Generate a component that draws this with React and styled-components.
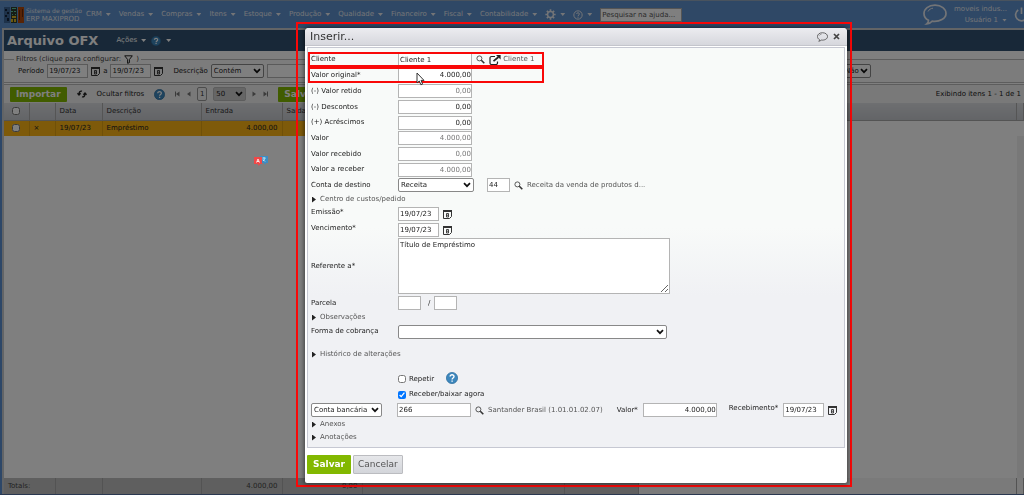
import React, { useState } from 'react';
import styled, { createGlobalStyle, css } from 'styled-components';

const GlobalStyle = createGlobalStyle`
  *, *::before, *::after {
    box-sizing: border-box;
  }

  body {
    margin: 0;
    background: #5b8fd0;
    font-family: 'DejaVu Sans', Verdana, sans-serif;
    font-size: 7px;
    line-height: 9px;
    color: #222;
    overflow: hidden;
  }

  input, select, textarea, button {
    font: inherit;
    color: inherit;
    margin: 0;
  }

  svg {
    display: block;
    flex: none;
  }
`;

const chevron =
  "url(\"data:image/svg+xml,%3Csvg xmlns='http://www.w3.org/2000/svg' viewBox='0 0 8 8'%3E%3Cpath d='M1 2.2l3 3 3-3' fill='none' stroke='%23111' stroke-width='1.7'/%3E%3C/svg%3E\")";

const Screen = styled.div`
  min-height: 100vh;
  display: flex;
  flex-direction: column;
  border-bottom: 1px solid #5570a0;
`;

/* ---------- top menu ---------- */

const TopBar = styled.header`
  display: flex;
  align-items: center;
  height: 28px;
  padding-left: 4px;
  background: #5e90cc;
  border-top: 1px solid #93a7bd;
  color: #e6e9ee;
  overflow: hidden;
`;

const Brand = styled.a`
  display: flex;
  align-items: center;
  gap: 2px;
  width: 82px;
  color: inherit;
  text-decoration: none;
`;

const BrandText = styled.span`
  font-size: 7px;
  line-height: 8px;
  white-space: nowrap;

  small {
    display: block;
    font-size: 6px;
  }
`;

const Menu = styled.nav`
  display: flex;
  align-items: center;
  gap: 8px;
`;

const MenuButton = styled.button`
  display: flex;
  align-items: center;
  gap: 4px;
  padding: 0;
  border: 0;
  background: none;
  white-space: nowrap;
`;

const Caret = styled.span`
  width: 5px;
  height: 3px;
  background: currentColor;
  clip-path: polygon(0 0, 100% 0, 50% 100%);
`;

const HelpSearch = styled.input`
  width: 82px;
  height: 14px;
  padding: 0 1px;
  border: 1px solid #aaa;
  background: #fff;

  &::placeholder {
    color: #555;
    opacity: 1;
  }
`;

const UserArea = styled.div`
  display: flex;
  align-items: center;
  gap: 7px;
  margin-left: auto;
`;

const UserName = styled.div`
  display: flex;
  flex-direction: column;
  align-items: flex-end;
  gap: 2px;
  white-space: nowrap;
`;

const PowerButton = styled.button`
  width: 10px;
  padding: 0;
  border: 0;
  background: none;
  overflow: hidden;
`;

/* ---------- page behind the dialog ---------- */

const Page = styled.main`
  flex: 1;
  display: flex;
  flex-direction: column;
  margin-left: 2px;
  border: solid #c4c8cc;
  border-width: 2px 0 0 2px;
  background: #fff;
`;

const TitleBar = styled.div`
  display: flex;
  align-items: center;
  height: 21px;
  padding-left: 3px;
  background: #315170;
  color: #fff;
`;

const PageTitle = styled.h1`
  margin: 0 18px 0 0;
  font-size: 13px;
  line-height: 16px;
`;

const TitleActions = styled.div`
  display: flex;
  align-items: center;
  gap: 5px;
`;

const Filters = styled.fieldset`
  margin: 3px 0 0;
  padding: 0 0 4px 14px;
  border: 1px solid #bbb;
  border-width: 1px 0;
  background: #f8f8f8;
  min-width: 0;
`;

const FilterLegend = styled.legend`
  display: flex;
  align-items: center;
  gap: 3px;
  margin-left: -4px;
  padding: 0 2px;
  height: 10px;
  color: #444;
`;

const FilterRow = styled.div`
  display: flex;
  align-items: center;
  gap: 3px;
  height: 14px;
`;

const FilterLabel = styled.label`
  margin-left: 7px;
`;

const FilterEnd = styled.div`
  margin: 0 153px 0 auto;
`;

const Toolbar = styled.div`
  display: flex;
  align-items: center;
  gap: 10px;
  height: 19px;
  margin-top: 1px;
  padding: 0 3px 0 6px;
  border-top: 1px solid #bbb;
  background: #f2f2f2;
  white-space: nowrap;
`;

const ToolButton = styled.button`
  display: flex;
  padding: 0;
  border: 0;
  background: none;
`;

const Pager = styled.div`
  display: flex;
  align-items: center;
  gap: 6px;
  color: #777;
`;

const CurrentPage = styled.span`
  width: 10px;
  border: 1px solid #999;
  border-radius: 2px;
  line-height: 12px;
  text-align: center;
  color: #333;
`;

const Counter = styled.span`
  margin-left: auto;
`;

const Grid = styled.table`
  width: 100%;
  table-layout: fixed;
  border-collapse: collapse;
  white-space: nowrap;

  th, td {
    height: 16px;
    padding: 0 4px;
    border-right: 1px solid #aaa;
    font-weight: normal;
    text-align: left;
  }

  thead th {
    height: 17px;
    background: linear-gradient(#dcdee2, #c6c9ce);
    border-bottom: 1px solid #a8a8a8;
    color: #333;
  }

  tbody td {
    background: #fcb414;
    border-color: #e0a010;
  }

  tfoot td {
    background: #bfbfbf;
    border-color: #a6a6a6;
    color: #444;
  }
`;

const NumberCell = styled.td`
  && {
    text-align: right;
  }
`;

const RestCell = styled.td`
  && {
    background: #f4f4f4;
  }
`;

const GridTick = styled.input`
  display: block;
  width: 8px;
  height: 8px;
  margin: 0 auto;
`;

const GridSpace = styled.div`
  flex: 1;
  border-right: 7px solid #f1f1f1;
`;

/* ---------- shared form parts ---------- */

const field = css`
  height: ${props => (props.$short ? 13 : 14)}px;
  width: ${props => props.$width}px;
  border: 1px solid #b4b4b4;
  background-color: #fff;
  color: #222;
`;

const TextField = styled.input`
  ${field}
  padding: 0 1px;
  text-align: ${props => (props.$number ? 'right' : 'left')};
  ${props => props.$number && 'padding-right: 0;'}

  &:disabled {
    color: #777;
  }
`;

const SelectField = styled.select`
  ${field}
  appearance: none;
  padding: 0 10px 0 2px;
  border-color: #888;
  border-radius: 2px;
  background-image: ${chevron};
  background-repeat: no-repeat;
  background-position: right 2px center;
  background-size: 8px 8px;
`;

const PageSize = styled(SelectField)`
  background-color: #ccc;
  border-color: #bbb;
`;

const GreenButton = styled.button`
  height: ${props => (props.$small ? 15 : 19)}px;
  padding: 0 6px;
  border: 0;
  border-radius: 1px;
  background: #82b800;
  color: #fff;
  font-size: 9px;
  font-weight: bold;
`;

const CancelButton = styled.button`
  height: 19px;
  padding: 0 4px;
  border: 1px solid #bbbcc0;
  border-radius: 1px;
  background: linear-gradient(#e6e7ea, #d3d5da);
  color: #555;
  font-size: 9px;
`;

/* ---------- dialog ---------- */

const Backdrop = styled.div`
  position: fixed;
  inset: 0;
  display: flex;
  align-items: flex-start;
  padding: 22px 172px 0 296px;
  background: rgba(0, 0, 0, 0.5);
`;

const Frame = styled.div`
  flex: 1;
  min-width: 0;
  padding: 4px 3px 2px 7px;
  border: 2px solid #f90808;
`;

const Dialog = styled.section`
  background: #fff;
  border-radius: 4px 4px 2px 2px;
  box-shadow: 0 0 4px 1px rgba(0, 0, 0, 0.5);
`;

const DialogHeader = styled.header`
  display: flex;
  align-items: center;
  height: 18px;
  padding: 0 7px 0 5px;
  border-radius: 4px 4px 0 0;
  border-bottom: 1px solid #c4c5cc;
  background: linear-gradient(#ececf0, #d6d7dd);
`;

const DialogTitle = styled.h2`
  flex: 1;
  margin: 0;
  font-size: 11px;
  font-weight: normal;
  line-height: 14px;
  color: #333;
`;

const HeaderButton = styled.button`
  display: flex;
  padding: 0;
  margin-left: 5px;
  border: 0;
  background: none;
  color: #444;
`;

const Panel = styled.form`
  margin: 1px 2px 0;
  padding: 4px 0 3px;
  border: 1px solid #c6c8d2;
  background: linear-gradient(#f8faf9 45%, #f0f1f4 62%);
`;

const Row = styled.div`
  position: relative;
  display: flex;
  align-items: center;
  min-height: ${props => (props.$tight ? 15 : 16)}px;
  padding-left: 3px;
  white-space: nowrap;

  ${props => props.$marked && css`
    &::after {
      content: '';
      position: absolute;
      inset: 0 auto 0 0;
      width: 236px;
      border: 2px solid #f90808;
      pointer-events: none;
    }
  `}
`;

const NoteRow = styled(Row)`
  padding-bottom: 1px;
`;

const Label = styled.label`
  width: 87px;
  color: #222;
  ${props => props.$raised && 'padding-bottom: 3px;'}
`;

const InlineLabel = styled.label`
  margin: 0 5px 0 ${props => (props.$far ? 12 : 14)}px;
  ${props => props.$raised && 'padding-bottom: 3px;'}
`;

const Hint = styled.span`
  color: #555;
`;

const IconButton = styled.button`
  display: flex;
  margin: 0 4px;
  padding: 0;
  border: 0;
  background: none;
  color: #333;
`;

const Slash = styled.span`
  width: 13px;
  padding-left: 7px;
`;

const Note = styled.textarea`
  width: 272px;
  height: 56px;
  padding: 2px 1px;
  border: 1px solid #b4b4b4;
  background: #fff;
  resize: both;
`;

const Toggle = styled.button`
  display: flex;
  align-items: center;
  gap: 4px;
  height: 13px;
  margin-top: ${props => (props.$spaced ? 9 : 0)}px;
  padding: 0 0 0 4px;
  border: 0;
  background: none;
  color: #555;

  &::before {
    content: '';
    width: 4px;
    height: 6px;
    background: #222;
    clip-path: polygon(0 0, 100% 50%, 0 100%);
  }
`;

const Checks = styled.div`
  margin-top: 10px;
  padding-left: 87px;
`;

const TickLabel = styled.label`
  display: flex;
  align-items: center;
  gap: 3px;

  input {
    width: 8px;
    height: 8px;
  }
`;

const AccountSelect = styled.div`
  width: 86px;
`;

const DialogFooter = styled.footer`
  display: flex;
  gap: 2px;
  padding: 7px 2px 9px;
`;

/* ---------- things floating over the page ---------- */

const Pointer = styled.svg`
  position: absolute;
  left: 108px;
  top: 5px;
  z-index: 1;
`;

const TranslateBadge = styled.svg`
  position: absolute;
  left: 254px;
  top: 156px;
`;

/* ---------- icons ---------- */

const Logo = () => (
  <svg width="20" height="16" viewBox="0 0 20 16" aria-hidden="true">
    <rect width="6" height="16" fill="#3c6494" />
    <path d="M1 2h2v2H1zM3 5h2v2H3zM1 8h2v2H1zM3 11h2v3H3z" fill="#14243c" />
    <rect x="7" width="6" height="16" fill="#2c3a2c" />
    <path d="M8 1h4v1H8zM7 4h2v1H7zM10 4h2v1h-2zM8 7h1v1H8zM11 7h1v1h-1z" fill="#5cc49c" />
    <path d="M8 9h4v2H8zM7 12h2v3H7zM10 12h2v3h-2z" fill="#d8b020" />
    <rect x="14" width="6" height="16" fill="#b0480c" />
    <path d="M15 3h1v10h-1zM18 2h1v8h-1z" fill="#6c2604" />
  </svg>
);

const HelpIcon = ({ size = 10 }) => (
  <svg width={size} height={size} viewBox="0 0 12 12" aria-hidden="true">
    <circle cx="6" cy="6" r="5.6" fill="#3d87bd" stroke="#2b6c9c" strokeWidth=".7" />
    <path d="M4.1 4.6c0-2.5 3.9-2.4 3.9-.1C8 6 6.1 5.9 6.1 7.4M6.1 8.4v1.3" fill="none" stroke="#fff" strokeWidth="1.4" />
  </svg>
);

const OutlineHelpIcon = () => (
  <svg width="10" height="10" viewBox="0 0 12 12" fill="none" stroke="currentColor" strokeWidth="1.2" aria-hidden="true">
    <circle cx="6" cy="6" r="5" />
    <path d="M4.3 4.8c0-2 3.4-2 3.4 0C7.7 6 6 6 6 7.2M6 8v1.3" />
  </svg>
);

const GearIcon = () => (
  <svg width="11" height="11" viewBox="0 0 12 12" fill="none" stroke="currentColor" aria-hidden="true">
    <circle cx="6" cy="6" r="3.2" strokeWidth="1.6" />
    <path d="M6 .4v2M6 9.600v2M.4 6h2M9.600 6h2M2 2l1.500 1.500M8.500 8.500L10 10M10 2L8.500 3.500M3.500 8.500L2 10" strokeWidth="1.8" />
  </svg>
);

const BubbleIcon = ({ width, height }) => (
  <svg width={width} height={height} viewBox="0 0 24 21" fill="none" stroke="currentColor" strokeWidth="1.7" aria-hidden="true">
    <path d="M12 1.200C5.500 1.200 1 4.800 1 9.400c0 3 1.700 5.400 4.500 6.800.1 1.500-.6 2.700-1.700 3.600 2.400-.2 4.200-1.200 5.300-2.600 7.700 1 13.900-2.800 13.900-7.800 0-4.600-4.500-8.200-11-8.200z" />
    <path d="M5 7.500C6 5.500 7.800 4.500 10 4.200" strokeWidth="1" />
  </svg>
);

const PowerIcon = () => (
  <svg width="15" height="15" viewBox="0 0 16 16" fill="none" stroke="currentColor" strokeWidth="1.8" aria-hidden="true">
    <path d="M4.500 3.200a6.300 6.300 0 1 0 7 0M8 .5v7" />
  </svg>
);

const FunnelIcon = () => (
  <svg width="9" height="9" viewBox="0 0 9 9" fill="none" stroke="#222" aria-hidden="true">
    <path d="M.7.8h7.600L5.400 4.500v3.200l-1.800.6V4.500z" />
  </svg>
);

const CalendarIcon = () => (
  <svg width="9" height="9" viewBox="0 0 9 9" fill="none" stroke="#333" aria-hidden="true">
    <path d="M0 1h9" strokeWidth="2" />
    <path d="M.5 1v7.500h6l2-2V1" />
    <path d="M3.500 3.500h2v3.500h-2zM3.500 5.200h2" strokeWidth=".9" />
  </svg>
);

const SearchIcon = () => (
  <svg width="9" height="9" viewBox="0 0 9 9" fill="none" stroke="currentColor" aria-hidden="true">
    <circle cx="3.400" cy="3.400" r="2.500" strokeWidth=".8" />
    <path d="M5.300 5.200l3 3" strokeWidth="1.6" />
  </svg>
);

const ExternalIcon = () => (
  <svg width="12" height="10" viewBox="0 0 12 10" fill="none" stroke="#222" aria-hidden="true">
    <path d="M6 1.500H2.500a1.500 1.500 0 0 0-1.500 1.500v5a1.500 1.500 0 0 0 1.500 1.500H7A1.500 1.500 0 0 0 8.500 8V6.500" strokeWidth="1.2" />
    <path d="M4.500 6.200l5-4.200" strokeWidth="1.7" />
    <path d="M7 0h4.600v4.600z" fill="#222" stroke="none" />
  </svg>
);

const CloseIcon = () => (
  <svg width="7" height="7" viewBox="0 0 7 7" stroke="currentColor" strokeWidth="1.7" aria-hidden="true">
    <path d="M1 1l5 5M6 1L1 6" />
  </svg>
);

const RefreshIcon = () => (
  <svg width="10" height="8" viewBox="0 0 10 8" fill="none" stroke="#222" strokeWidth="1.3" aria-hidden="true">
    <path d="M5 1.200C3 .7 2 2 2 4.500M.4 3.300L2 5l1.600-1.700M5 6.800c2 .5 3-.8 3-3.300M6.400 4.700L8 3l1.600 1.700" />
  </svg>
);

const PagerIcon = ({ flip, bar }) => (
  <svg width="5" height="6" viewBox="0 0 5 6" fill="currentColor" transform={flip ? 'scale(-1 1)' : undefined} aria-hidden="true">
    <path d="M4.500.5v5L1 3z" />
    {bar && <path d="M0 .5h1v5H0z" />}
  </svg>
);

const menus = [
  'CRM', 'Vendas', 'Compras', 'Itens', 'Estoque',
  'Produção', 'Qualidade', 'Financeiro', 'Fiscal', 'Contabilidade'
];

const amounts = [
  { id: 'retido', label: '(-) Valor retido', value: '0,00', disabled: true },
  { id: 'descontos', label: '(-) Descontos', value: '0,00' },
  { id: 'acrescimos', label: '(+) Acréscimos', value: '0,00', tight: true },
  { id: 'valor', label: 'Valor', value: '4.000,00', disabled: true },
  { id: 'recebido', label: 'Valor recebido', value: '0,00', disabled: true },
  { id: 'receber', label: 'Valor a receber', value: '4.000,00', disabled: true, tight: true }
];

const Columns = () => (
  <colgroup>
    {[25, 26, 47, 99, 81, 80, 202, 74].map((width, index) => (
      <col key={index} width={width} />
    ))}
    <col />
    <col width="7" />
  </colgroup>
);

const DateField = ({ id, label }) => (
  <>
    <TextField id={id} aria-label={label} $width={41} defaultValue="19/07/23" />
    <IconButton type="button" aria-label="Abrir calendário"><CalendarIcon /></IconButton>
  </>
);

const Header = () => (
  <TopBar>
    <Brand href="#">
      <Logo />
      <BrandText><small>Sistema de gestão</small>ERP MAXIPROD</BrandText>
    </Brand>
    <Menu>
      {menus.map(name => (
        <MenuButton key={name}>{name}<Caret /></MenuButton>
      ))}
      <MenuButton aria-label="Configurações"><GearIcon /><Caret /></MenuButton>
      <MenuButton aria-label="Ajuda"><OutlineHelpIcon /><Caret /></MenuButton>
      <HelpSearch aria-label="Pesquisar na ajuda" placeholder="Pesquisar na ajuda..." />
    </Menu>
    <UserArea>
      <BubbleIcon width={24} height={21} />
      <UserName>
        <span>moveis indus...</span>
        <MenuButton>Usuário 1<Caret /></MenuButton>
      </UserName>
      <PowerButton aria-label="Sair"><PowerIcon /></PowerButton>
    </UserArea>
  </TopBar>
);

const OfxPage = () => (
  <Page>
    <TitleBar>
      <PageTitle>Arquivo OFX</PageTitle>
      <TitleActions>
        <MenuButton>Ações<Caret /></MenuButton>
        <MenuButton aria-label="Ajuda"><HelpIcon /></MenuButton>
        <MenuButton aria-label="Mais"><Caret /></MenuButton>
      </TitleActions>
    </TitleBar>

    <Filters>
      <FilterLegend>Filtros (clique para configurar: <FunnelIcon />)</FilterLegend>
      <FilterRow>
        <label htmlFor="inicio">Período</label>
        <TextField id="inicio" $width={41} defaultValue="19/07/23" />
        <CalendarIcon />
        <label htmlFor="fim">a</label>
        <TextField id="fim" $width={41} defaultValue="19/07/23" />
        <CalendarIcon />
        <FilterLabel htmlFor="descricao">Descrição</FilterLabel>
        <SelectField id="descricao" $width={53}><option>Contém</option></SelectField>
        <TextField aria-label="Texto da descrição" $width={80} />
        <FilterEnd>
          <SelectField aria-label="Conciliação" $width={29}><option>Não</option></SelectField>
        </FilterEnd>
      </FilterRow>
    </Filters>

    <Toolbar>
      <GreenButton $small>Importar</GreenButton>
      <ToolButton aria-label="Atualizar"><RefreshIcon /></ToolButton>
      <ToolButton>Ocultar filtros</ToolButton>
      <ToolButton aria-label="Ajuda"><HelpIcon size={11} /></ToolButton>
      <Pager>
        <PagerIcon bar />
        <PagerIcon />
        <CurrentPage>1</CurrentPage>
        <PageSize aria-label="Itens por página" $width={33}><option>50</option></PageSize>
        <PagerIcon flip />
        <PagerIcon flip bar />
      </Pager>
      <GreenButton $small>Salvar</GreenButton>
      <Counter>Exibindo itens 1 - 1 de 1</Counter>
    </Toolbar>

    <Grid>
      <Columns />
      <thead>
        <tr>
          <th><GridTick type="checkbox" aria-label="Selecionar todos" /></th>
          <th />
          <th>Data</th>
          <th>Descrição</th>
          <th>Entrada</th>
          <th>Saída</th>
          <th colSpan="3" />
          <th />
        </tr>
      </thead>
      <tbody>
        <tr>
          <td><GridTick type="checkbox" aria-label="Selecionar" /></td>
          <td>×</td>
          <td>19/07/23</td>
          <td>Empréstimo</td>
          <NumberCell>4.000,00</NumberCell>
          <td />
          <td />
        </tr>
      </tbody>
    </Grid>
    <GridSpace />
    <Grid>
      <Columns />
      <tfoot>
        <tr>
          <td colSpan="2">Totals:</td>
          <td />
          <td />
          <NumberCell>4.000,00</NumberCell>
          <NumberCell>0,00</NumberCell>
          <td />
          <td />
          <RestCell />
          <RestCell />
        </tr>
      </tfoot>
    </Grid>
  </Page>
);

const InsertDialog = () => {
  const [settleNow, setSettleNow] = useState(true);

  return (
    <Backdrop>
      <Frame>
        <Dialog role="dialog" aria-labelledby="titulo">
          <DialogHeader>
            <DialogTitle id="titulo">Inserir...</DialogTitle>
            <HeaderButton aria-label="Comentar"><BubbleIcon width={11} height={10} /></HeaderButton>
            <HeaderButton aria-label="Fechar"><CloseIcon /></HeaderButton>
          </DialogHeader>

          <Panel id="titulo-form">
            <Row $tight $marked>
              <Label htmlFor="cliente">Cliente</Label>
              <TextField id="cliente" $short $width={74} defaultValue="Cliente 1" />
              <IconButton type="button" aria-label="Procurar cliente"><SearchIcon /></IconButton>
              <ExternalIcon />
              <Hint>&nbsp;Cliente 1</Hint>
            </Row>
            <Row $marked>
              <Label htmlFor="original">Valor original*</Label>
              <TextField id="original" $number $width={74} defaultValue="4.000,00" />
              <Pointer width="9" height="14" viewBox="0 0 9 14" aria-hidden="true">
                <path d="M1 1v10l2.300-2 1.600 3.800 1.700-.7L5 8.400h3z" fill="#fff" stroke="#333" />
              </Pointer>
            </Row>

            {amounts.map(item => (
              <Row key={item.id} $tight={item.tight}>
                <Label htmlFor={item.id}>{item.label}</Label>
                <TextField
                  id={item.id}
                  $number
                  $width={74}
                  defaultValue={item.value}
                  disabled={item.disabled}
                />
              </Row>
            ))}

            <Row>
              <Label htmlFor="destino">Conta de destino</Label>
              <SelectField id="destino" $width={76}><option>Receita</option></SelectField>
              <Slash />
              <TextField aria-label="Código da conta" $width={23} defaultValue="44" />
              <IconButton type="button" aria-label="Procurar conta"><SearchIcon /></IconButton>
              <Hint>Receita da venda de produtos d...</Hint>
            </Row>
            <Toggle type="button">Centro de custos/pedido</Toggle>

            <Row>
              <Label htmlFor="emissao" $raised>Emissão*</Label>
              <DateField id="emissao" />
            </Row>
            <Row>
              <Label htmlFor="vencimento" $raised>Vencimento*</Label>
              <DateField id="vencimento" />
            </Row>
            <NoteRow>
              <Label htmlFor="referente">Referente a*</Label>
              <Note id="referente" defaultValue="Título de Empréstimo" />
            </NoteRow>
            <Row>
              <Label htmlFor="parcela">Parcela</Label>
              <TextField id="parcela" $width={23} />
              <Slash>/</Slash>
              <TextField aria-label="Total de parcelas" $width={23} />
            </Row>
            <Toggle type="button">Observações</Toggle>
            <Row $tight>
              <Label htmlFor="cobranca">Forma de cobrança</Label>
              <SelectField id="cobranca" $width={269}><option> </option></SelectField>
            </Row>
            <Toggle type="button" $spaced>Histórico de alterações</Toggle>

            <Checks>
              <Row>
                <TickLabel><input type="checkbox" />Repetir</TickLabel>
                <InlineLabel as="span" $far $raised><HelpIcon size={12} /></InlineLabel>
              </Row>
              <Row $tight>
                <TickLabel>
                  <input
                    type="checkbox"
                    checked={settleNow}
                    onChange={(e) => setSettleNow(e.target.checked)}
                  />
                  Receber/baixar agora
                </TickLabel>
              </Row>
            </Checks>

            <Row>
              <AccountSelect>
                <SelectField aria-label="Tipo de conta" $width={71}><option>Conta bancária</option></SelectField>
              </AccountSelect>
              <TextField aria-label="Conta" $width={74} defaultValue="266" />
              <IconButton type="button" aria-label="Procurar conta"><SearchIcon /></IconButton>
              <Hint>Santander Brasil (1.01.01.02.07)</Hint>
              <InlineLabel htmlFor="valor-baixa">Valor*</InlineLabel>
              <TextField id="valor-baixa" $number $width={74} defaultValue="4.000,00" />
              <InlineLabel htmlFor="recebimento" $far $raised>Recebimento*</InlineLabel>
              <DateField id="recebimento" />
            </Row>
            <Toggle type="button">Anexos</Toggle>
            <Toggle type="button">Anotações</Toggle>
          </Panel>

          <DialogFooter>
            <GreenButton form="titulo-form" type="button">Salvar</GreenButton>
            <CancelButton type="button">Cancelar</CancelButton>
          </DialogFooter>
        </Dialog>
      </Frame>

      <TranslateBadge width="14" height="10" viewBox="0 0 14 10" aria-hidden="true">
        <path d="M6 0h8v7h-2l-1 2-1-2H6z" fill="#3c8cc4" />
        <path d="M8.500 2h3M10 1.500v1M9 5l2-2.500M9 3.500l2 2" stroke="#dff" strokeWidth=".8" />
        <path d="M0 1h8v7H6L5 10 3.500 8H0z" fill="#f04848" />
        <path d="M2.500 6.500L4 3l1.500 3.500M3 5.500h2" fill="none" stroke="#fff" strokeWidth=".8" />
      </TranslateBadge>
    </Backdrop>
  );
};

const App = () => (
  <>
    <GlobalStyle />
    <Screen>
      <Header />
      <OfxPage />
    </Screen>
    <InsertDialog />
  </>
);

export default App;
